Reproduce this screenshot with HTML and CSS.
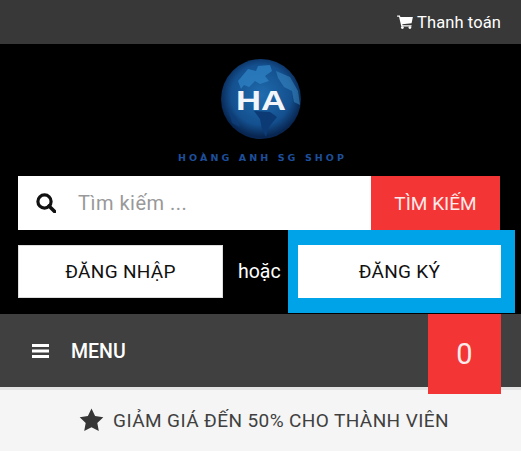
FILE: index.html
```html
<!DOCTYPE html>
<html lang="vi">
<head>
  <meta charset="UTF-8">
  <title>Hoàng Anh SG Shop</title>
  <link rel="stylesheet" href="styles.css">
</head>
<body>
  <div class="topbar">
    <a class="checkout">
      <svg class="cart-icon" viewBox="0 0 18 16"><path d="M0 .6h3.200l.5 1.700H18l-1.500 7.200-10.600 1 .3 1.200h10.300v1.400H4.800L2.200 2H0z"/><circle cx="6" cy="14.400" r="1.600"/><circle cx="14.600" cy="14.400" r="1.600"/></svg>
      Thanh toán
    </a>
  </div>

  <div class="head">
    <div class="logo">
      <svg viewBox="0 0 170 110" width="170" height="110">
        <defs>
          <radialGradient id="globe" cx="50%" cy="45%" r="52%">
            <stop offset="0" stop-color="#1f6cae"/>
            <stop offset="0.72" stop-color="#14508f"/>
            <stop offset="1" stop-color="#082651"/>
          </radialGradient>
        </defs>
        <circle cx="85" cy="40" r="40" fill="url(#globe)"/>
        <path d="M62 22l10-12 8 2 2-5 12-1 2 6-7 5 4 5-9 3-5-3-6 6-5-2-3 4z" fill="#2f83c4" opacity=".75"/>
        <path d="M100 12l14 6 8 14 2 14-6-3-2-11-8-4-6-9z" fill="#3b8fca" opacity=".5"/>
        <path d="M78 52l16 1 7 5-8 10-3 10-4-8-2-10z" fill="#0c3a74"/>
        <path d="M52 50l8 8 4 10-8-4z" fill="#0e3f7c" opacity=".7"/>
        <text class="logo-ha" x="85" y="51" text-anchor="middle" textLength="50" lengthAdjust="spacingAndGlyphs">HA</text>
        <text class="logo-name" x="85" y="102" text-anchor="middle" textLength="166" lengthAdjust="spacing">HOÀNG ANH SG SHOP</text>
      </svg>
    </div>

    <form class="search">
      <svg class="search-icon" viewBox="0 0 20 20"><circle cx="8.500" cy="8.500" r="6.600" fill="none" stroke="#111" stroke-width="3.200"/><path d="M13 13l5.600 5.600" stroke="#111" stroke-width="3.600" stroke-linecap="round"/></svg>
      <input type="text" placeholder="Tìm kiếm ...">
      <button type="button">TÌM KIẾM</button>
    </form>

    <div class="account">
      <a class="account-btn login">ĐĂNG NHẬP</a>
      <span class="or">hoặc</span>
      <div class="highlight">
        <a class="account-btn">ĐĂNG KÝ</a>
      </div>
    </div>
  </div>

  <div class="menubar">
    <svg class="menu-icon" viewBox="0 0 17 14"><path d="M0 0h17v3H0zM0 5.500h17v3H0zM0 11h17v3H0z"/></svg>
    <span class="menu-label">MENU</span>
    <div class="cart-count">0</div>
  </div>

  <div class="promo">
    <svg class="star-icon" viewBox="0 0 24 24"><path d="M12 .6l3.600 7.500 8.200 1.100-6 5.700 1.500 8.200L12 19.200l-7.300 3.900 1.500-8.200-6-5.700 8.200-1.100z"/></svg>
    GIẢM GIÁ ĐẾN 50% CHO THÀNH VIÊN
  </div>
</body>
</html>
```

FILE: styles.css
```css
* {
  box-sizing: border-box;
}

body {
  margin: 0;
  font-family: Roboto, "Liberation Sans", sans-serif;
  background: #f5f5f5;
  overflow: hidden;
}

.topbar {
  height: 44px;
  background: #383838;
  display: flex;
  justify-content: flex-end;
  align-items: center;
  padding-right: 20px;
}

.checkout {
  color: #fff;
  font-size: 16.5px;
  letter-spacing: 0.1px;
  display: flex;
  align-items: center;
  gap: 4px;
}

.cart-icon {
  width: 16px;
  height: 14px;
  fill: #fff;
}

.head {
  height: 270px;
  background: #000;
  padding-top: 15px;
}

.logo {
  height: 117px;
  display: flex;
  justify-content: center;
}

.logo-ha {
  font-family: "Liberation Sans", sans-serif;
  font-size: 27px;
  font-weight: bold;
  fill: #f2f5fa;
}

.logo-name {
  font-family: "DejaVu Sans", sans-serif;
  font-size: 9.5px;
  font-weight: bold;
  fill: #1d4f9c;
}

.search {
  display: flex;
  align-items: center;
  height: 54px;
  margin: 0 21px 0 18px;
  background: #fff;
}

.search-icon {
  width: 20px;
  height: 20px;
  margin-left: 18px;
  flex-shrink: 0;
}

.search input {
  flex: 1;
  min-width: 0;
  height: 100%;
  border: none;
  outline: none;
  padding: 0 0 0 22px;
  font-family: inherit;
  font-size: 20px;
  letter-spacing: 0.5px;
}

.search input::placeholder {
  color: #999;
}

.search button {
  width: 129px;
  height: 100%;
  border: none;
  background: #f33535;
  color: #fdeaea;
  font-family: inherit;
  font-size: 19px;
}

.account {
  display: flex;
  align-items: center;
  padding-left: 18px;
}

.account-btn {
  display: flex;
  justify-content: center;
  align-items: center;
  height: 53px;
  background: #fff;
  color: #111;
  font-size: 19px;
  letter-spacing: 0.3px;
}

.login {
  width: 205px;
  border: 1px solid #ddd;
}

.or {
  width: 50px;
  margin-left: 15px;
  color: #fff;
  font-size: 19.5px;
}

.highlight {
  width: 227px;
  padding: 15px 14px 15px 10px;
  background: #00a2e8;
}

.menubar {
  position: relative;
  height: 73px;
  background: #404040;
  display: flex;
  align-items: center;
  padding-left: 32px;
}

.menu-icon {
  width: 17px;
  height: 14px;
  fill: #fff;
}

.menu-label {
  color: #fff;
  font-size: 19.5px;
  font-weight: 500;
  margin-left: 22px;
  padding-top: 1px;
}

.cart-count {
  position: absolute;
  top: 0;
  left: 428px;
  width: 73px;
  height: 80px;
  background: #f33535;
  color: #fdeaea;
  font-size: 29px;
  display: flex;
  justify-content: center;
  align-items: center;
}

.promo {
  height: 64px;
  background: #f5f5f5;
  border-top: 3px solid #e4e4e4;
  padding: 0 0 1px 7px;
  color: #404040;
  font-size: 19px;
  letter-spacing: 0.4px;
  display: flex;
  justify-content: center;
  align-items: center;
  gap: 9px;
}

.star-icon {
  width: 25px;
  height: 24px;
  fill: #363636;
}
```
